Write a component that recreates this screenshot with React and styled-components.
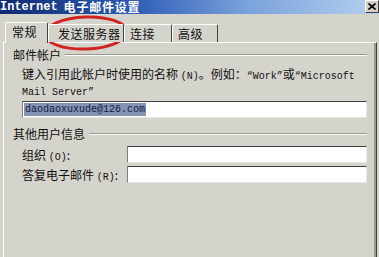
import React from "react";
import styled, { createGlobalStyle } from "styled-components";

const Global = createGlobalStyle`
  html, body { margin: 0; padding: 0; background: #d5d4cc; }
  body { font-family: "Noto Sans CJK SC", "Liberation Sans", sans-serif; }
`;

const Window = styled.div`
  position: relative;
  width: 379px;
  height: 257px;
  overflow: hidden;
  background: #d5d4cc;
`;

const TitleBar = styled.div`
  height: 14px;
  display: flex;
  align-items: flex-start;
  justify-content: space-between;
  background: linear-gradient(to right, #0c2a72 0%, #2d5cb4 35%, #7aa2dc 65%, #b4d0ee 100%);
`;

const Title = styled.div`
  color: #fff;
  font-weight: bold;
  font-size: 12px;
  line-height: 12px;
  padding-top: 1px;
  white-space: nowrap;
  display: flex;
  align-items: center;
  gap: 6px;
`;

const TitleCJK = styled.span`
  letter-spacing: 0.8px;
`;

const Mono = styled.span`
  font-family: "Liberation Mono", "DejaVu Sans Mono", monospace;
  font-size: ${(p) => p.$size || 10}px;
  font-weight: ${(p) => (p.$bold ? "bold" : "normal")};
`;

const CloseBtn = styled.div`
  width: 14px;
  height: 13px;
  background: #d4d0c8;
  border: 1px solid;
  border-color: #fff #404040 #404040 #fff;
  box-sizing: border-box;
  display: flex;
  align-items: center;
  justify-content: center;
`;

const Body = styled.div`
  padding: 8px 2px 0 3px;
`;

const Tabs = styled.div`
  display: flex;
  align-items: flex-end;
  height: 20px;
  padding-left: 2px;
  position: relative;
  z-index: 1;
`;

const Tab = styled.div`
  width: ${(p) => p.$w}px;
  height: ${(p) => (p.$active ? 21 : 18)}px;
  box-sizing: border-box;
  padding-left: ${(p) => p.$pad}px;
  padding-bottom: ${(p) => (p.$active ? 3 : 0)}px;
  border-top: 1px solid #fff;
  border-left: 1px solid #fff;
  border-right: 1px solid #404040;
  border-top-left-radius: 2px;
  border-top-right-radius: 2px;
  background: #d5d4cc;
  font-size: 12px;
  letter-spacing: 0.5px;
  line-height: 16px;
  color: #111;
  display: flex;
  align-items: center;
  margin-bottom: ${(p) => (p.$active ? -1 : 0)}px;
`;

const Panel = styled.div`
  height: 230px;
  box-sizing: border-box;
  border-top: 1px solid #fff;
  border-left: 1px solid #fff;
  border-right: 1px solid #404040;
  box-shadow: inset -2px 0 0 #9a9a94;
  padding: 0 9px 0 9px;
`;

const GroupTitle = styled.div`
  display: flex;
  align-items: center;
  gap: 4px;
  margin-top: ${(p) => p.$mt || 0}px;
  font-size: 12px;
  line-height: 14px;
  color: #111;
  &::after {
    content: "";
    flex: 1;
    height: 0;
    border-top: 1px solid #9a9a94;
    border-bottom: 1px solid #fff;
  }
`;

const Group = styled.div`
  padding-left: 9px;
`;

const Desc = styled.div`
  font-size: 12px;
  line-height: 13px;
  color: #111;
  white-space: nowrap;
  margin-top: ${(p) => p.$mt || 0}px;
`;

const Input = styled.div`
  height: 17px;
  box-sizing: border-box;
  background: #fff;
  border: 1px solid;
  border-color: #404040 #e4e4e0 #e4e4e0 #808080;
  display: flex;
  align-items: center;
  padding-left: 1px;
  flex: 1;
`;

const Selected = styled.span`
  background: #8593b4;
  color: #101c3c;
  font-family: "Liberation Mono", "DejaVu Sans Mono", monospace;
  font-size: 10px;
  line-height: 13px;
  padding: 0 1px;
`;

const Row = styled.div`
  display: flex;
  align-items: center;
  margin-top: ${(p) => p.$mt || 0}px;
`;

const Label = styled.div`
  width: 105px;
  font-size: 12px;
  color: #111;
  white-space: nowrap;
`;

const Ellipse = styled.svg`
  position: absolute;
  left: 42px;
  top: 14px;
  pointer-events: none;
`;

export default function App() {
  return (
    <>
      <Global />
      <Window>
        <TitleBar>
          <Title>
            <Mono $bold $size={12}>Internet</Mono>
            <TitleCJK>电子邮件设置</TitleCJK>
          </Title>
          <CloseBtn>
            <svg width="8" height="7" viewBox="0 0 8 7">
              <path d="M0.5 0.5 L7.5 6.5 M7.5 0.5 L0.5 6.5" stroke="#000" strokeWidth="1.6" />
            </svg>
          </CloseBtn>
        </TitleBar>
        <Body>
          <Tabs>
            <Tab $active $w={43} $pad={6}>常规</Tab>
            <Tab $w={76} $pad={9}>发送服务器</Tab>
            <Tab $w={48} $pad={5}>连接</Tab>
            <Tab $w={46} $pad={5}>高级</Tab>
          </Tabs>
          <Panel>
            <GroupTitle $mt={5}>邮件帐户</GroupTitle>
            <Group>
              <Desc $mt={5}>
                键入引用此帐户时使用的名称 <Mono>(N)</Mono>。例如：<Mono>“Work”</Mono>或<Mono>“Microsoft</Mono>
              </Desc>
              <Desc>
                <Mono>Mail Server”</Mono>
              </Desc>
              <Row $mt={2}>
                <Input>
                  <Selected>daodaoxuxude@126.com</Selected>
                </Input>
              </Row>
            </Group>
            <GroupTitle $mt={9}>其他用户信息</GroupTitle>
            <Group>
              <Row $mt={5}>
                <Label>组织 <Mono>(O)</Mono>:</Label>
                <Input />
              </Row>
              <Row $mt={3}>
                <Label>答复电子邮件 <Mono>(R)</Mono>:</Label>
                <Input />
              </Row>
            </Group>
          </Panel>
        </Body>
        <Ellipse width="90" height="40" viewBox="0 0 90 40">
          <ellipse cx="44" cy="19" rx="41" ry="16" fill="none" stroke="#d22420" strokeWidth="3" transform="rotate(-2 44 19)" />
        </Ellipse>
      </Window>
    </>
  );
}
